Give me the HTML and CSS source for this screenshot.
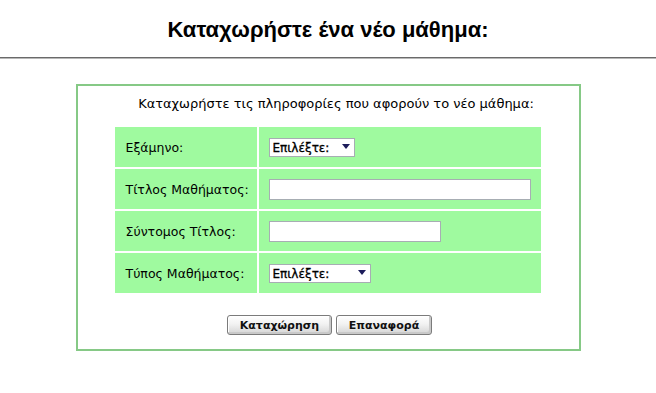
FILE: index.html
```html
<!DOCTYPE html>
<html lang="el">
<head>
<meta charset="utf-8">
<title>Νέο μάθημα</title>
<link rel="stylesheet" href="styles.css">
</head>
<body>
<h1 class="title">Καταχωρήστε ένα νέο μάθημα:</h1>
<hr class="rule">
<form class="box">
  <p class="intro">Καταχωρήστε τις πληροφορίες που αφορούν το νέο μάθημα:</p>
  <div class="grid">
    <div class="label">Εξάμηνο:</div>
    <div class="field">
      <span class="sel sel-short">
        <select><option>Επιλέξτε:</option></select>
        <svg class="arrow" width="8" height="5" viewBox="0 0 8 5"><path d="M0 0H8L4 5Z" fill="#1c1c5a"/></svg>
      </span>
    </div>
    <div class="label">Τίτλος Μαθήματος:</div>
    <div class="field"><input class="txt txt-long" type="text"></div>
    <div class="label">Σύντομος Τίτλος:</div>
    <div class="field"><input class="txt txt-mid" type="text"></div>
    <div class="label">Τύπος Μαθήματος:</div>
    <div class="field">
      <span class="sel sel-long">
        <select><option>Επιλέξτε:</option></select>
        <svg class="arrow" width="8" height="5" viewBox="0 0 8 5"><path d="M0 0H8L4 5Z" fill="#1c1c5a"/></svg>
      </span>
    </div>
  </div>
  <div class="buttons">
    <button type="submit" class="btn btn-save">Καταχώρηση</button>
    <button type="reset" class="btn btn-reset">Επαναφορά</button>
  </div>
</form>
</body>
</html>
```

FILE: styles.css
```css
html, body {
  margin: 0;
  padding: 0;
  background: #ffffff;
}
body {
  font-family: "DejaVu Sans", Verdana, sans-serif;
  color: #000;
}
.title {
  margin: 17px 0 0;
  font-family: "Liberation Sans", Arial, sans-serif;
  font-size: 22px;
  line-height: 25px;
  font-weight: bold;
  text-align: center;
}
.rule {
  margin: 15px 0 0;
  border: none;
  border-top: 1px solid #6a6a6a;
  border-bottom: 1px solid #b8b8b8;
  height: 0;
}
.box {
  width: 501px;
  margin: 25px auto 0;
  border: 2px solid #86c986;
  padding: 10px 0 14px;
}
.intro {
  margin: 0 0 15px;
  padding-left: 16px;
  font-size: 13px;
  line-height: 16px;
  text-align: center;
}
.grid {
  display: grid;
  grid-template-columns: 142px 282px;
  grid-auto-rows: 40px;
  gap: 2px;
  width: 426px;
  margin: 0 0 0 37px;
}
.label, .field {
  background: #9ffa9f;
  display: flex;
  align-items: center;
}
.label {
  padding-left: 11px;
  font-size: 12.5px;
}
.field {
  padding-left: 10px;
}
.txt {
  box-sizing: border-box;
  height: 21px;
  border: 1px solid #a7adb3;
  background: #fff;
  margin: 0;
  padding: 0 3px;
}
.txt-long { width: 262px; }
.txt-mid { width: 172px; }
.sel {
  position: relative;
  display: inline-block;
}
.sel select {
  -webkit-appearance: none;
  appearance: none;
  box-sizing: border-box;
  height: 19px;
  border: 1px solid #a7adb3;
  border-radius: 0;
  background: #fff;
  margin: 0;
  padding: 0 0 0 3px;
  font-family: "DejaVu Sans", Verdana, sans-serif;
  font-size: 12px;
  font-weight: normal;
  -webkit-text-stroke: 0.3px #000;
  color: #000;
}
.sel-short select { width: 86px; }
.sel-long select { width: 102px; }
.arrow {
  position: absolute;
  right: 5px;
  top: 7px;
  pointer-events: none;
}
.buttons {
  display: flex;
  justify-content: center;
  gap: 4px;
  margin-top: 22px;
  padding-left: 3px;
}
.btn {
  box-sizing: border-box;
  height: 20px;
  padding: 0;
  border: 1px solid #7b7b7b;
  border-radius: 3px;
  background: linear-gradient(#ffffff, #f2f2f2 45%, #d4d4d4);
  box-shadow: inset -2px -2px 0 #c9c9c9, inset 1px 1px 0 #ffffff;
  font-family: "DejaVu Sans", Verdana, sans-serif;
  font-size: 11px;
  font-weight: bold;
  color: #111;
}
.btn-save { width: 105px; }
.btn-reset { width: 96px; }
```
